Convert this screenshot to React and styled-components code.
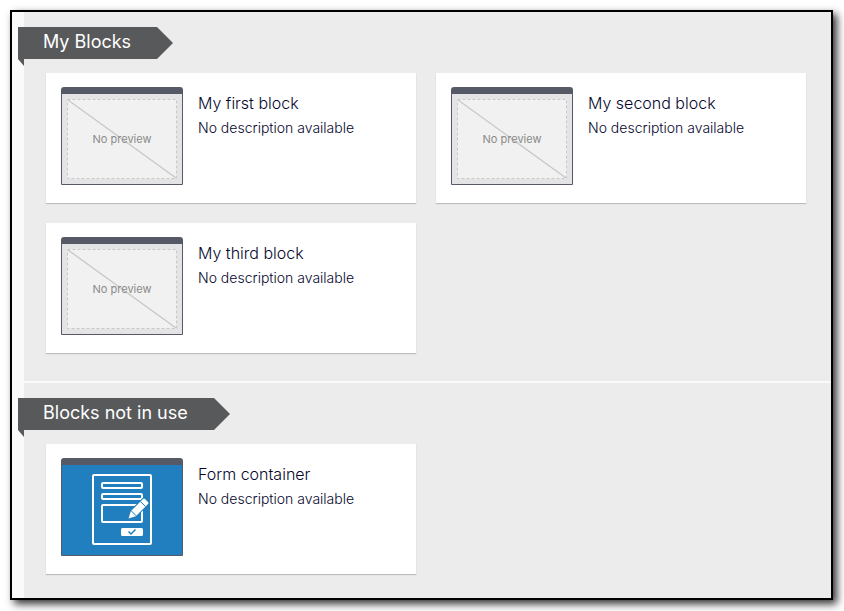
import React from 'react';
import styled, { createGlobalStyle } from 'styled-components';

const GlobalStyle = createGlobalStyle`
  * {
    box-sizing: border-box;
  }

  body {
    margin: 0;
    background: #fff;
    font-family: Inter, 'Liberation Sans', sans-serif;
  }
`;

const Frame = styled.main`
  margin: 10px 11px 11px 10px;
  padding-left: 12px;
  border: 2px solid #000;
  background: #fafafa;
  box-shadow: 4px 4px 8px rgba(0, 0, 0, 0.8);
`;

const Section = styled.section`
  padding: 15px 25px 24px 22px;
  background: #ececec;

  & + & {
    border-top: 2px solid #fafafa;
  }

  &:not(:last-child) {
    padding-bottom: 28px;
  }
`;

const Ribbon = styled.h2`
  position: relative;
  width: fit-content;
  height: 32px;
  margin: 0 0 14px -28px;
  padding: 0 26px 0 25px;
  background: #58595b;
  color: #fff;
  font-size: 18px;
  font-weight: 400;
  line-height: 30px;

  /* pointed end */
  &::after {
    content: '';
    position: absolute;
    top: 0;
    left: 100%;
    border: 16px solid transparent;
    border-right-width: 0;
    border-left-color: #58595b;
  }

  /* fold behind the page edge */
  &::before {
    content: '';
    position: absolute;
    top: 100%;
    left: 0;
    border-top: 7px solid #58595b;
    border-left: 6px solid transparent;
  }
`;

const CardGrid = styled.ul`
  display: grid;
  grid-template-columns: repeat(2, 1fr);
  gap: 20px;
  margin: 0;
  padding: 0;
  list-style: none;
`;

const Card = styled.li`
  display: flex;
  gap: 15px;
  min-height: 130px;
  padding: 14px 15px;
  background: #fff;
  box-shadow: 0 1px 1px rgba(0, 0, 0, 0.2);
`;

const Thumbnail = styled.div`
  display: flex;
  flex: none;
  width: 122px;
  height: 98px;
  padding: ${({ $filled }) => ($filled ? '0' : '5px')};
  border: 1px solid #555a66;
  border-top-width: 7px;
  border-radius: 3px 3px 1px 1px;
  background: ${({ $filled }) => ($filled ? '#217ebf' : '#e4e4e6')};

  svg {
    display: block;
    margin: auto;
  }
`;

const NoPreview = styled.div`
  display: grid;
  flex: 1;
  place-items: center;
  background: #f1f1f1;

  > * {
    grid-area: 1 / 1;
  }
`;

const NoPreviewText = styled.span`
  color: #8a8a8a;
  font-size: 11px;
  line-height: 16px;
`;

const CardBody = styled.div`
  min-width: 0;
  padding-top: 4px;
  color: #06062c;
  font-weight: 300;
`;

const CardTitle = styled.h3`
  margin: 0 0 3px;
  font-size: 16px;
  font-weight: 300;
  line-height: 24px;
`;

const CardText = styled.p`
  margin: 0;
  font-size: 14px;
  line-height: 20px;
`;

const EmptyPreview = () => (
  <NoPreview>
    <svg width="110" height="80" viewBox="0 0 110 80" fill="none" stroke="#c8c8c4" aria-hidden="true">
      <rect x="0.5" y="0.5" width="109" height="79" strokeDasharray="3 2" />
      <path d="M1 1L109 79" strokeWidth="1.3" />
    </svg>
    <NoPreviewText>No preview</NoPreviewText>
  </NoPreview>
);

const FormIcon = () => (
  <svg width="60" height="72" viewBox="0 0 60 72" fill="none" stroke="#fff" strokeWidth="2" aria-hidden="true">
    <rect x="1" y="1" width="58" height="69" rx="1" />
    <rect x="10" y="9" width="40" height="5" rx="1" />
    <rect x="10" y="20" width="40" height="5" rx="1" />
    <rect x="10" y="31" width="40" height="17" rx="1" />
    <rect x="29" y="54" width="22" height="8" rx="1.5" fill="#fff" stroke="none" />
    <path d="M36.5 57.5L39 60L43.5 55.5" stroke="#217ebf" strokeWidth="1.5" />
    <path
      d="M36.5 44.5L38.8 37.2L51 25Q52 24 53 25L56 28Q57 29 56 30L43.8 42.2Z"
      fill="#fff"
      stroke="#217ebf"
      strokeWidth="2"
      paintOrder="stroke"
    />
    <path d="M39.2 36.8L44.2 41.8M48.5 27.5L53.5 32.5" stroke="#217ebf" strokeWidth="1" />
  </svg>
);

const BlockCard = ({ title, description = 'No description available', icon }) => (
  <Card>
    <Thumbnail $filled={Boolean(icon)}>{icon || <EmptyPreview />}</Thumbnail>
    <CardBody>
      <CardTitle>{title}</CardTitle>
      <CardText>{description}</CardText>
    </CardBody>
  </Card>
);

const sections = [
  {
    name: 'My Blocks',
    blocks: [
      { title: 'My first block' },
      { title: 'My second block' },
      { title: 'My third block' },
    ],
  },
  {
    name: 'Blocks not in use',
    blocks: [{ title: 'Form container', icon: <FormIcon /> }],
  },
];

const App = () => (
  <>
    <GlobalStyle />
    <Frame>
      {sections.map(({ name, blocks }) => (
        <Section key={name}>
          <Ribbon>{name}</Ribbon>
          <CardGrid>
            {blocks.map((block) => (
              <BlockCard key={block.title} {...block} />
            ))}
          </CardGrid>
        </Section>
      ))}
    </Frame>
  </>
);

export default App;
